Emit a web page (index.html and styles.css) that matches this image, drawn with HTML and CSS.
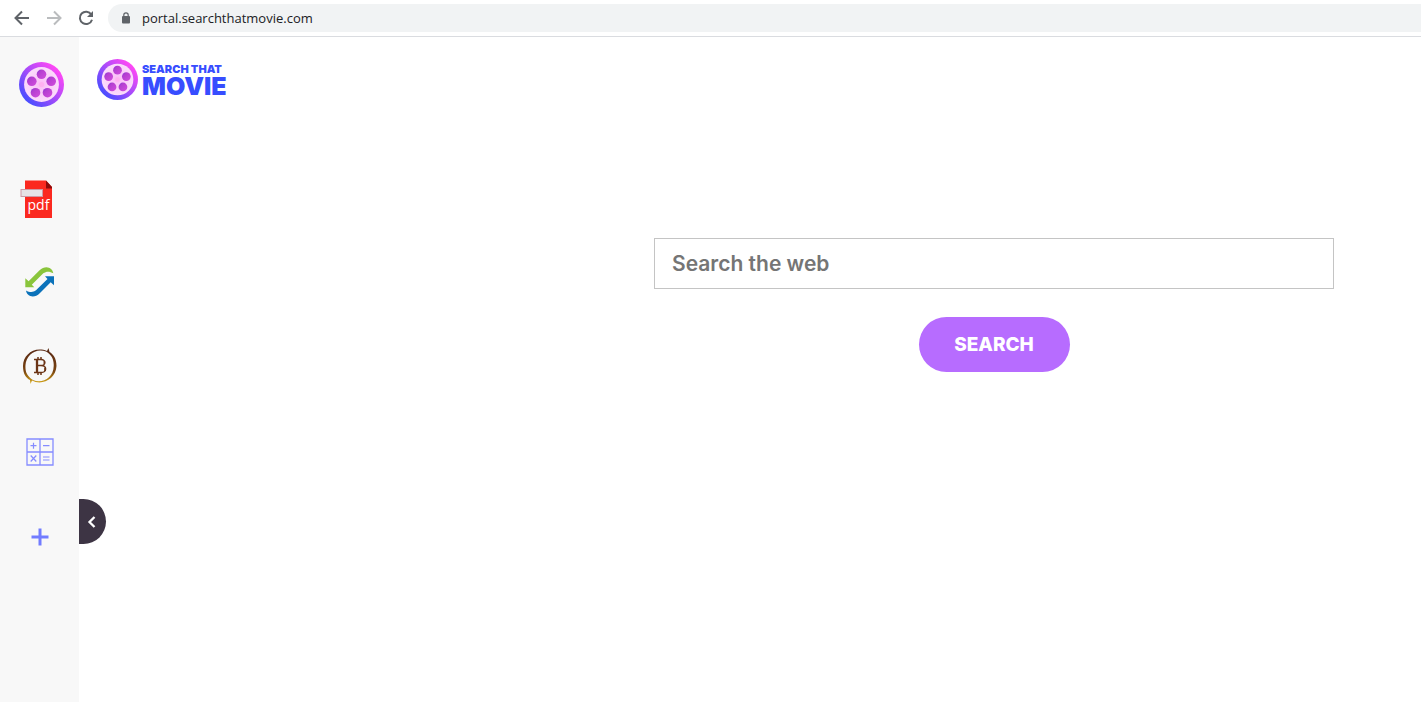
FILE: index.html
```html
<!DOCTYPE html>
<html lang="en">
  <head>
    <meta charset="UTF-8">
    <meta name="viewport" content="width=device-width, initial-scale=1.0">
    <title>Search That Movie</title>
    <link rel="stylesheet" href="styles.css">
  </head>
  <body>
    <!-- Film reel, used in the sidebar and in the brand -->
    <svg class="defs" aria-hidden="true">
      <defs>
        <linearGradient id="rim" x1="0" y1="1" x2="1" y2="0">
          <stop offset="0.15" stop-color="#4a4dff"/>
          <stop offset="0.5" stop-color="#a64bfa"/>
          <stop offset="0.85" stop-color="#ff48f5"/>
        </linearGradient>
        <linearGradient id="hole" x1="0" y1="0" x2="1" y2="1">
          <stop offset="0.1" stop-color="#8a35d8"/>
          <stop offset="0.3" stop-color="#b43fd0"/>
          <stop offset="0.9" stop-color="#cf4bdc"/>
        </linearGradient>
        <radialGradient id="hub">
          <stop offset="0" stop-color="#ffb4f4"/>
          <stop offset="0.25" stop-color="#fbc4f8"/>
          <stop offset="1" stop-color="#fbdcfb"/>
        </radialGradient>
      </defs>
      <symbol id="reel" viewBox="0 0 45 45">
        <circle cx="22.5" cy="22.5" r="22.5" fill="url(#rim)"/>
        <circle cx="22.5" cy="22.5" r="17.4" fill="url(#hub)"/>
        <g fill="url(#hole)">
          <circle cx="22.5" cy="12.3" r="4.8"/>
          <circle cx="32.2" cy="19.3" r="4.8"/>
          <circle cx="28.5" cy="30.7" r="4.8"/>
          <circle cx="16.5" cy="30.7" r="4.8"/>
          <circle cx="12.8" cy="19.3" r="4.8"/>
        </g>
        <circle cx="22.5" cy="22.5" r="2.6" fill="#ffb0f1"/>
      </symbol>
    </svg>

    <header class="toolbar">
      <button class="tool" type="button" aria-label="Back">
        <svg width="16" height="16" viewBox="0 0 16 16" fill="none" stroke="#5f6368" stroke-width="2"><path d="M15 8H2M8 1.5L1.5 8L8 14.5"/></svg>
      </button>
      <button class="tool" type="button" aria-label="Forward">
        <svg width="16" height="16" viewBox="0 0 16 16" fill="none" stroke="#babcbe" stroke-width="2"><path d="M1 8H14M8 1.5L14.5 8L8 14.5"/></svg>
      </button>
      <button class="tool" type="button" aria-label="Reload">
        <svg width="16" height="16" viewBox="0 0 16 16"><path d="M13.3 4.5A6.2 6.2 0 1 0 14 9.7" fill="none" stroke="#5f6368" stroke-width="2"/><path d="M15 1V7H9Z" fill="#5f6368"/></svg>
      </button>
      <div class="address">
        <svg width="10" height="12" viewBox="0 0 10 12"><rect x="1" y="4" width="8" height="7.5" rx="1" fill="#5f6368"/><path d="M2.8 4.5V3a2.2 2.2 0 0 1 4.4 0V4.5" fill="none" stroke="#5f6368" stroke-width="1.2"/></svg>
        <input class="url" type="text" value="portal.searchthatmovie.com" aria-label="Address">
      </div>
    </header>

    <div class="page">
      <aside class="sidebar">
        <a class="home" href="#" aria-label="Home"><svg width="45" height="45"><use href="#reel"/></svg></a>
        <nav class="apps">
          <a class="app app-pdf" href="#" aria-label="PDF">
            <svg width="34" height="40" viewBox="0 0 34 40">
              <path d="M5 1.5H26L32 8V39H5Z" fill="#fb2920"/>
              <path d="M26 1.5L32 8V9.5H26Z" fill="#8c0c0c"/>
              <rect x="1" y="10.5" width="21.5" height="7" fill="#e6e3e6" stroke="#cd9aa5" stroke-width="1"/>
              <text class="pdf-text" x="7.5" y="31">pdf</text>
            </svg>
          </a>
          <a class="app" href="#" aria-label="Converter">
            <svg width="32" height="32" viewBox="0 0 32 32">
              <path d="M1.3 12.3L4.6 15.3L15.3 4.6C18 1.8 20 1.2 22.5 1.2C26 1.3 28.8 3.5 29.3 7.2C26 5.4 22.500 4.800 19.300 7.300L7.800 18.700L10.300 21.300H1.300Z" fill="#8ac53c"/>
              <path d="M30 19.300L26.700 16.300L16 27C13.300 29.800 11.300 30.400 8.800 30.400C5.300 30.300 2.500 28.100 2 24.400C5.300 26.200 8.800 26.800 12 24.300L23.500 12.900L21 10.300H30Z" fill="#0b72ba"/>
            </svg>
          </a>
          <a class="app" href="#" aria-label="Bitcoin">
            <svg width="36" height="40" viewBox="0 0 36 40">
              <defs>
                <linearGradient id="coin" x1="0" y1="0" x2="0" y2="1">
                  <stop offset="0.1" stop-color="#5c2b14"/>
                  <stop offset="0.65" stop-color="#7a4410"/>
                  <stop offset="1" stop-color="#dcae19"/>
                </linearGradient>
              </defs>
              <path d="M25 4C12 -1 1 8 1 19C1 27 4 31 8 33L8.5 37L10 33.5C20 39 34 32 34.5 19C34.5 11 31 7 27.5 5L26.5 1ZM24 4.5C30 8 32 13 31.7 19C31.5 31 20 37 11 33C5 29 3 25 3.5 18C4 8 14 .5 24 4.5Z" fill="url(#coin)" fill-rule="evenodd"/>
              <g fill="none" stroke="#6b3416">
                <path d="M12 12.5H19C24.5 12.5 24 18.5 19 18.5C25.5 18.5 25 25.5 19 25.5H12M15.5 18.5H19" stroke-width="1.3"/>
                <path d="M15 12.5V25.5" stroke-width="2.3"/>
                <path d="M16 10V12.5M19 10V12.5M16 25.5V28M19 25.5V28M22.3 14V17M22.9 20.5V24" stroke-width="1.5"/>
              </g>
            </svg>
          </a>
          <a class="app" href="#" aria-label="Calculator">
            <svg width="28" height="28" viewBox="0 0 28 28" fill="none" stroke="#858cff">
              <path d="M1 1H27V27H1ZM14 1V27M1 14H27" stroke-width="1.3"/>
              <path d="M4.5 7.7H10.5M7.5 4.7V10.7M17 7.7H23.5M4.7 17.5L10.3 23.5M10.3 17.5L4.7 23.5M17 19H23.5M17 22H23.5" stroke-width="1.2"/>
            </svg>
          </a>
          <a class="app" href="#" aria-label="Add">
            <svg width="18" height="18" viewBox="0 0 18 18"><path d="M9 .5V17.5M.5 9H17.5" stroke="#727cff" stroke-width="3"/></svg>
          </a>
        </nav>
        <button class="collapse" type="button" aria-label="Collapse sidebar">
          <svg width="9" height="12" viewBox="0 0 9 12" fill="none" stroke="#fff" stroke-width="2.3"><path d="M7.5 1L2.5 6L7.5 11"/></svg>
        </button>
      </aside>

      <main class="content">
        <a class="brand" href="#">
          <svg width="41" height="41"><use href="#reel"/></svg>
          <span class="brand-text">
            <span class="brand-top">SEARCH THAT</span>
            <span class="brand-main">MOVIE</span>
          </span>
        </a>
        <form class="search">
          <input class="search-box" type="text" placeholder="Search the web" aria-label="Search the web">
          <button class="search-button" type="submit">SEARCH</button>
        </form>
      </main>
    </div>
  </body>
</html>
```
FILE: styles.css
```css
* {
    box-sizing: border-box;
}
body {
    margin: 0;
    min-height: 100vh;
    display: flex;
    flex-direction: column;
    background: #fff;
    font-family: Inter, "Open Sans", sans-serif;
}
button {
    border: none;
    padding: 0;
    cursor: pointer;
}
svg {
    display: block;
}
.defs {
    position: absolute;
    width: 0;
    height: 0;
}

/* Browser bar */
.toolbar {
    display: flex;
    align-items: center;
    gap: 16px;
    height: 37px;
    padding-left: 14px;
    border-bottom: 1px solid #dadce0;
}
.tool {
    background: none;
}
.address {
    flex: 1;
    display: flex;
    align-items: center;
    gap: 11px;
    height: 28px;
    margin-left: -2px;
    padding-left: 13px;
    border-radius: 14px 0 0 14px;
    background: #f1f3f4;
}
.url {
    flex: 1;
    padding: 0;
    border: none;
    background: none;
    font: 13px "Open Sans", sans-serif;
    color: #202124;
}

.page {
    flex: 1;
    display: flex;
}

/* Sidebar */
.sidebar {
    position: relative;
    width: 79px;
    padding-top: 25px;
    background: #f8f8f8;
}
.home {
    display: block;
    margin-left: 19px;
}
.apps {
    display: flex;
    flex-direction: column;
    gap: 45px;
    margin-top: 70px;
}
.app {
    display: flex;
    align-items: center;
    justify-content: center;
    height: 40px;
}
.app-pdf {
    padding: 4px 6px 0 0;
}
.pdf-text {
    font: 14px "Open Sans", sans-serif;
    fill: #fff;
}
.collapse {
    position: absolute;
    top: 462px;
    left: 100%;
    display: flex;
    align-items: center;
    width: 27px;
    height: 45px;
    padding-left: 8px;
    border-radius: 0 23px 23px 0;
    background: #3d3444;
}

/* Search */
.content {
    flex: 1;
    padding: 22px 87px 40px 18px;
}
.brand {
    display: flex;
    align-items: center;
    gap: 4px;
    width: max-content;
    color: #374dff;
    font-weight: 900;
    text-decoration: none;
}
.brand-text {
    display: flex;
    flex-direction: column;
}
.brand-top {
    font-size: 11px;
    line-height: 12px;
}
.brand-main {
    font-size: 25px;
    line-height: 22px;
}
.search {
    display: flex;
    flex-direction: column;
    align-items: center;
    gap: 28px;
    max-width: 680px;
    margin: 138px 0 0 auto;
}
.search-box {
    width: 100%;
    height: 51px;
    padding: 0 17px;
    border: 1px solid #c4c4c4;
    font: 600 21px Inter, sans-serif;
    color: #333;
}
.search-box::placeholder {
    color: #757575;
}
.search-button {
    width: 151px;
    height: 55px;
    border-radius: 28px;
    background: #b76cff;
    font: 800 19px Inter, sans-serif;
    color: #fff;
}
```
